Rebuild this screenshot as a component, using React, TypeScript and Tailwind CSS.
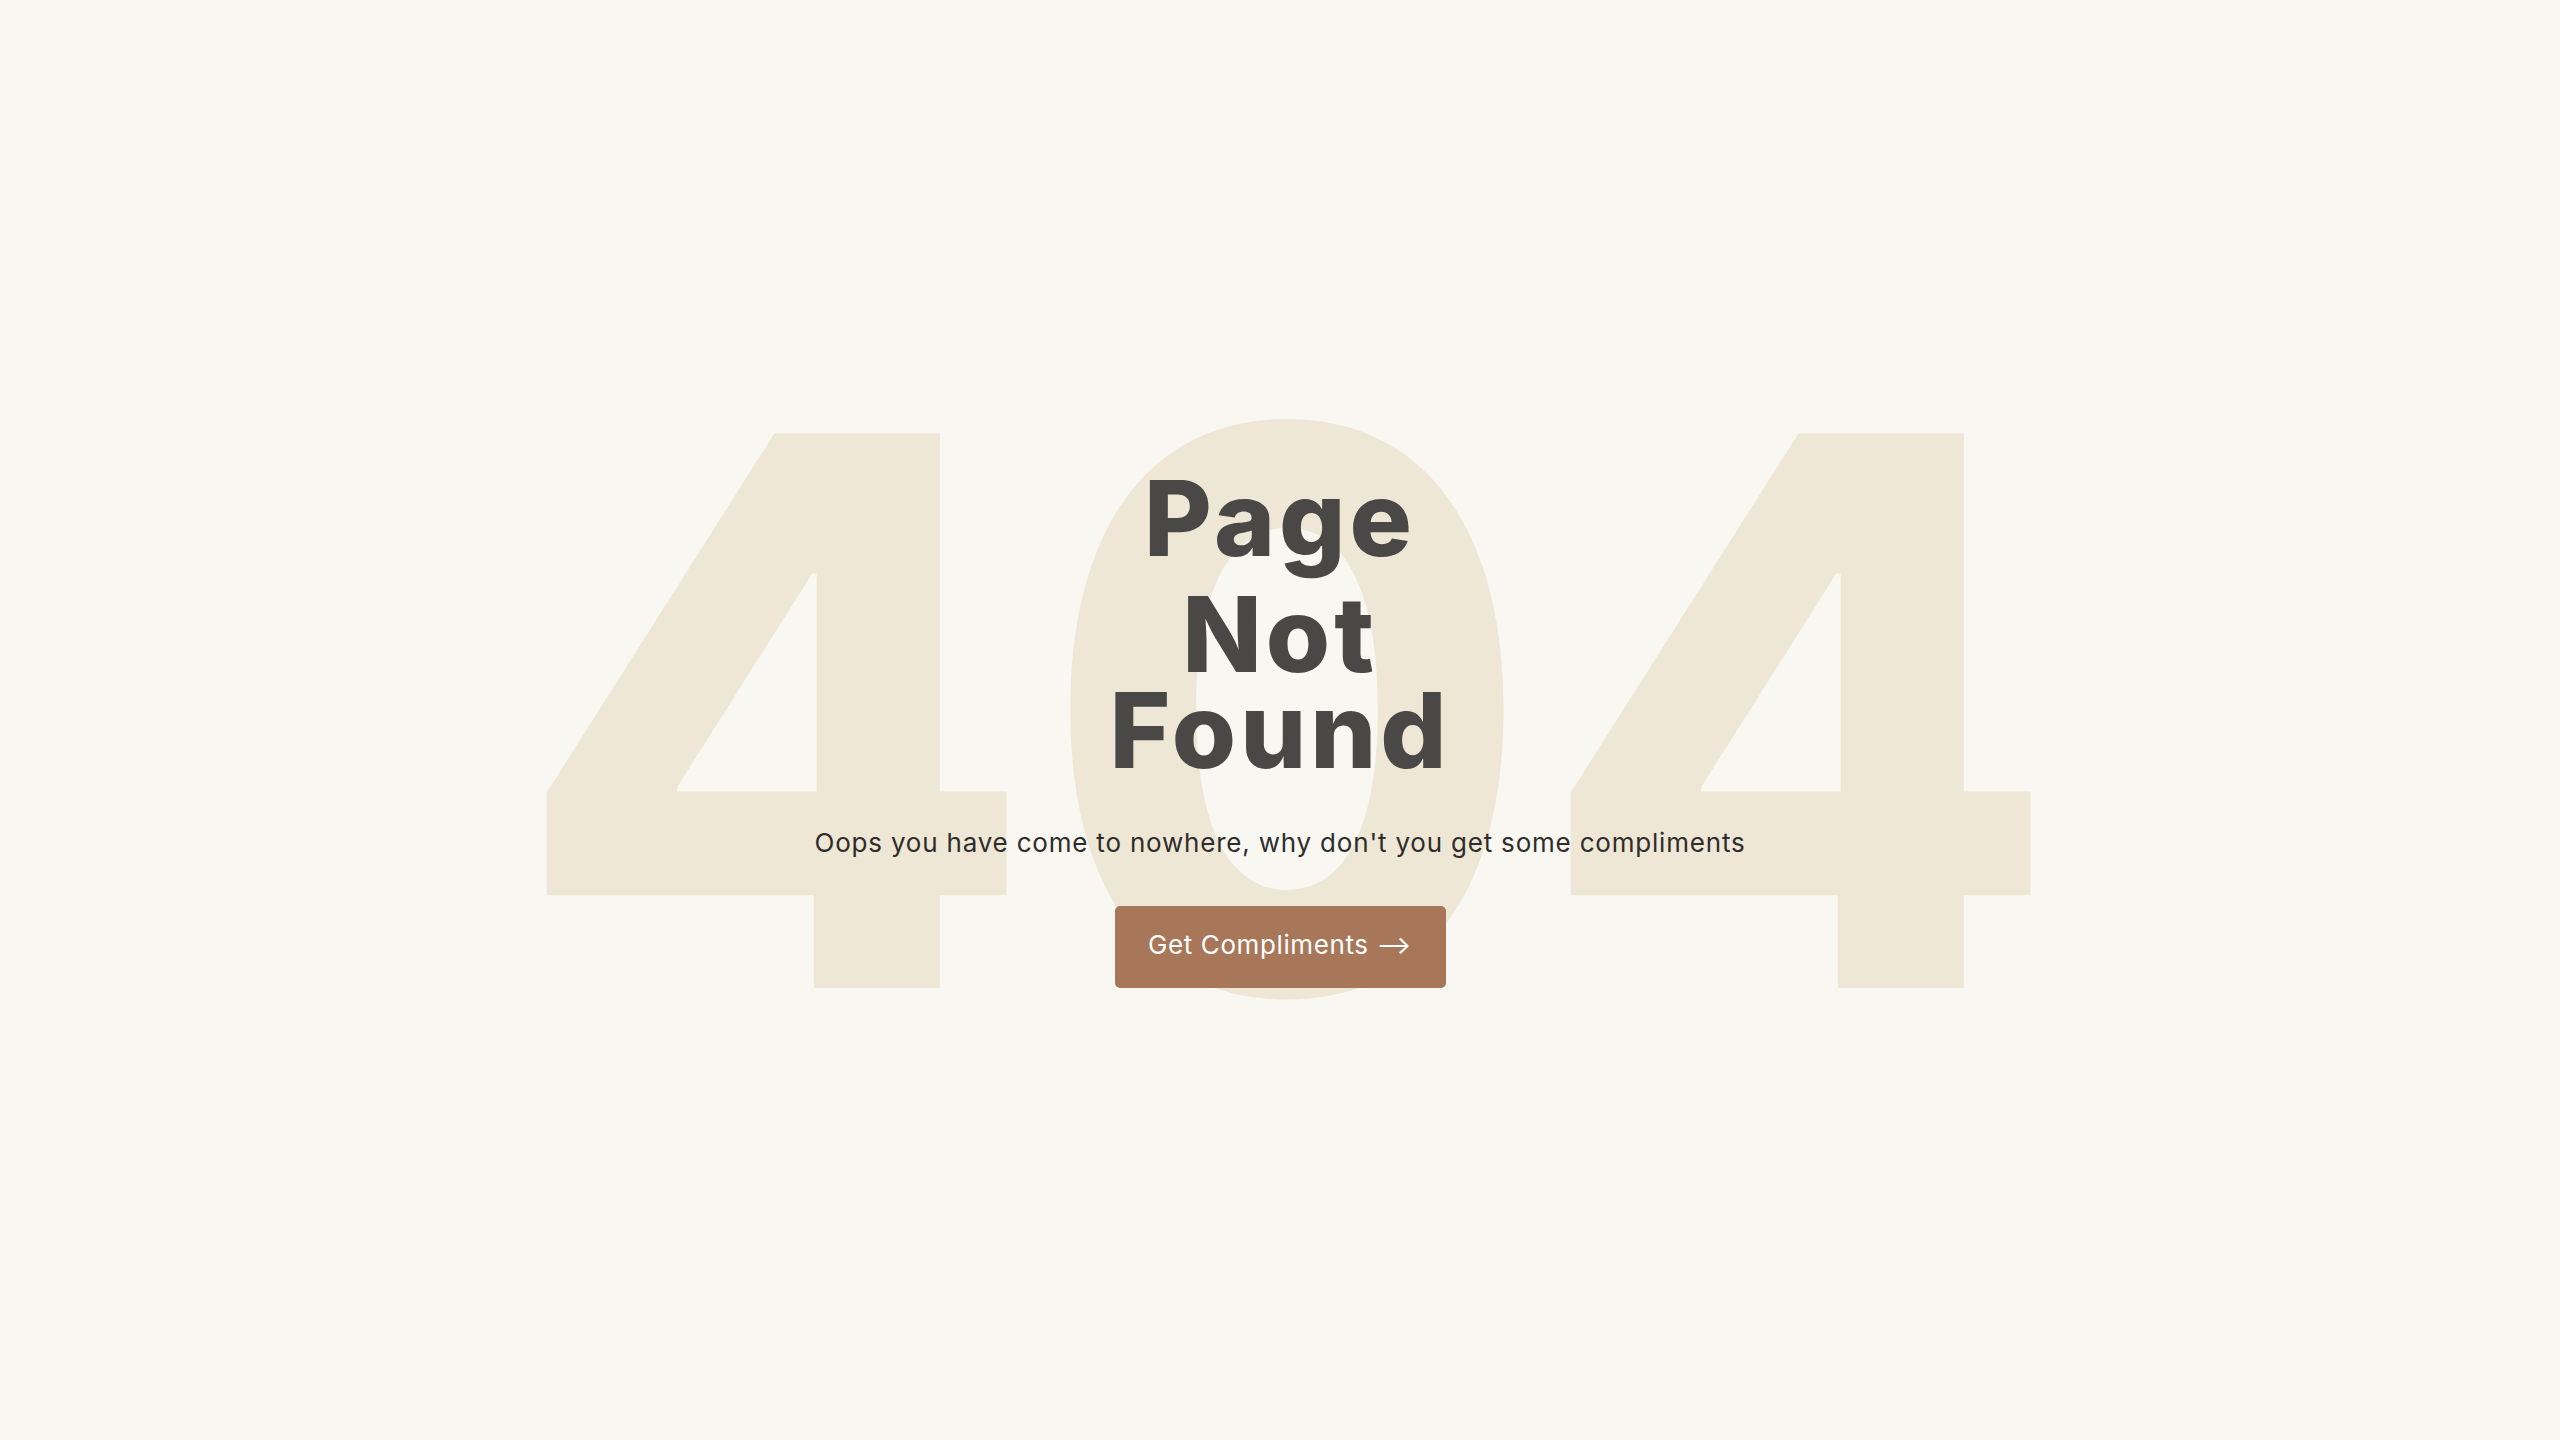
import React from "react";

export default function App() {
  return (
    <div
      className="relative h-[1440px] w-full overflow-hidden bg-[#f8f7f2]"
      style={{ fontFamily: "Inter, 'Noto Sans', sans-serif" }}
    >
      {/* Background 404 */}
      <div
        aria-hidden
        className="pointer-events-none absolute inset-x-0 top-[330px] flex select-none justify-center text-[762px] font-extrabold leading-[762px] text-[#eee7d5]"
      >
        <span className="w-[512px] text-center">4</span>
        <span className="inline-block w-[512px] origin-[50%_60%] scale-x-[0.93] scale-y-[1.02] text-center">0</span>
        <span className="w-[512px] text-center">4</span>
      </div>

      {/* Content */}
      <div className="relative flex flex-col items-center pt-[470px]">
        <h1 className="flex flex-col items-center text-[104px] font-extrabold leading-[96px] tracking-[4px] text-[#4a4846]">
          <span className="mb-[20px]">Page</span>
          <span>Not</span>
          <span>Found</span>
        </h1>
        <p className="mt-[47px] text-[26px] leading-[36px] tracking-[0.8px] text-[#2e2d2b]">
          Oops you have come to nowhere, why don't you get some compliments
        </p>
        <button className="mt-[45px] h-[82px] w-[331px] rounded-[5px] bg-[#a87759] pb-[4px] text-[26px] leading-[36px] tracking-[0.6px] text-white">
          Get Compliments ⟶
        </button>
      </div>
    </div>
  );
}
